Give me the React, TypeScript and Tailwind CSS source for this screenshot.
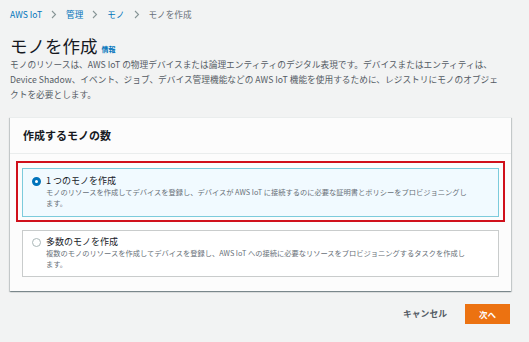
import React from "react";

const Chevron = () => (
  <svg width="6" height="9" viewBox="0 0 6 9" className="mx-[9px]">
    <path d="M1 1l3.5 3.5L1 8" fill="none" stroke="#879596" strokeWidth="1.1" />
  </svg>
);

const Option = ({
  title,
  lines,
  selected,
}: {
  title: string;
  lines: string[];
  selected?: boolean;
}) => (
  <div
    className={
      selected
        ? "flex items-start border border-[#7ccbdc] bg-[#f1faff] pl-[9px] pt-[6px] pb-[7px]"
        : "flex items-start border border-[#c9cccc] bg-white pl-[9px] pt-[5px] pb-[7px]"
    }
  >
    <span
      className={
        selected
          ? "mt-[2px] h-[9px] w-[9px] shrink-0 rounded-full border-[3px] border-[#0073bb] bg-white"
          : "mt-[2px] h-[9px] w-[9px] shrink-0 rounded-full border border-[#aab7b8] bg-white"
      }
    />
    <div className="ml-[5px]">
      <div className="text-[9px] leading-[12px] text-[#16191f]">{title}</div>
      <div
        className={
          selected
            ? "whitespace-nowrap text-[7.25px] leading-[11px] text-[#687078]"
            : "whitespace-nowrap text-[7.25px] leading-[10.5px] text-[#687078]"
        }
      >
        {lines.map((l, i) => (
          <div key={i}>{l}</div>
        ))}
      </div>
    </div>
  </div>
);

export default function App() {
  return (
    <div className="min-h-[342px] bg-[#f2f3f3] pl-[10px] pr-[18px] pt-[8px] font-['Noto_Sans_CJK_JP','Noto_Sans',sans-serif]">
      <nav className="flex h-[12px] items-center text-[8.6px] leading-[12px]">
        <span className="text-[#0073bb]">AWS IoT</span>
        <Chevron />
        <span className="text-[#0073bb]">管理</span>
        <Chevron />
        <span className="text-[#0073bb]">モノ</span>
        <Chevron />
        <span className="text-[#687078]">モノを作成</span>
      </nav>

      <div className="mt-[15px] flex items-end h-[22px]">
        <h1 className="text-[17.5px] leading-[22px] font-normal text-[#16191f]">モノを作成</h1>
        <span className="ml-[4px] mb-[3px] text-[7px] leading-[10px] font-bold text-[#0073bb]">情報</span>
      </div>
      <p className="whitespace-nowrap text-[8.7px] leading-[15px] text-[#545b64]">
        モノのリソースは、AWS IoT の物理デバイスまたは論理エンティティのデジタル表現です。デバイスまたはエンティティは、
        <br />
        Device Shadow、イベント、ジョブ、デバイス管理機能などの AWS IoT 機能を使用するために、レジストリにモノのオブジェ
        <br />
        クトを必要とします。
      </p>

      <section className="mt-[15px] bg-[#fcfcfc] shadow-[0_1px_1px_0_rgba(0,28,36,0.3),1px_1px_1px_0_rgba(0,28,36,0.15),-1px_1px_1px_0_rgba(0,28,36,0.15)] border-t border-[#eaeded]">
        <div className="flex h-[36px] items-center border-b border-[#eaeded] pl-[13px] text-[11px] font-bold text-[#16191f]">
          作成するモノの数
        </div>
        <div className="px-[6px] pt-[7px] pb-[14px]">
          <div className="border-2 border-[#d0101b] pt-[5px] pb-[3px] px-[4px]">
            <Option
              selected
              title="1 つのモノを作成"
              lines={[
                "モノのリソースを作成してデバイスを登録し、デバイスが AWS IoT に接続するのに必要な証明書とポリシーをプロビジョニングし",
                "ます。",
              ]}
            />
          </div>
          <div className="mx-[6px] mt-[8px]">
            <Option
              title="多数のモノを作成"
              lines={[
                "複数のモノのリソースを作成してデバイスを登録し、AWS IoT への接続に必要なリソースをプロビジョニングするタスクを作成し",
                "ます。",
              ]}
            />
          </div>
        </div>
      </section>

      <div className="mt-[13px] flex items-center justify-end">
        <button className="text-[8.8px] font-bold text-[#545b64]">キャンセル</button>
        <button className="ml-[18px] mr-[1px] h-[20px] w-[45px] bg-[#ec7211] text-[8.5px] font-bold text-white">
          次へ
        </button>
      </div>
    </div>
  );
}
